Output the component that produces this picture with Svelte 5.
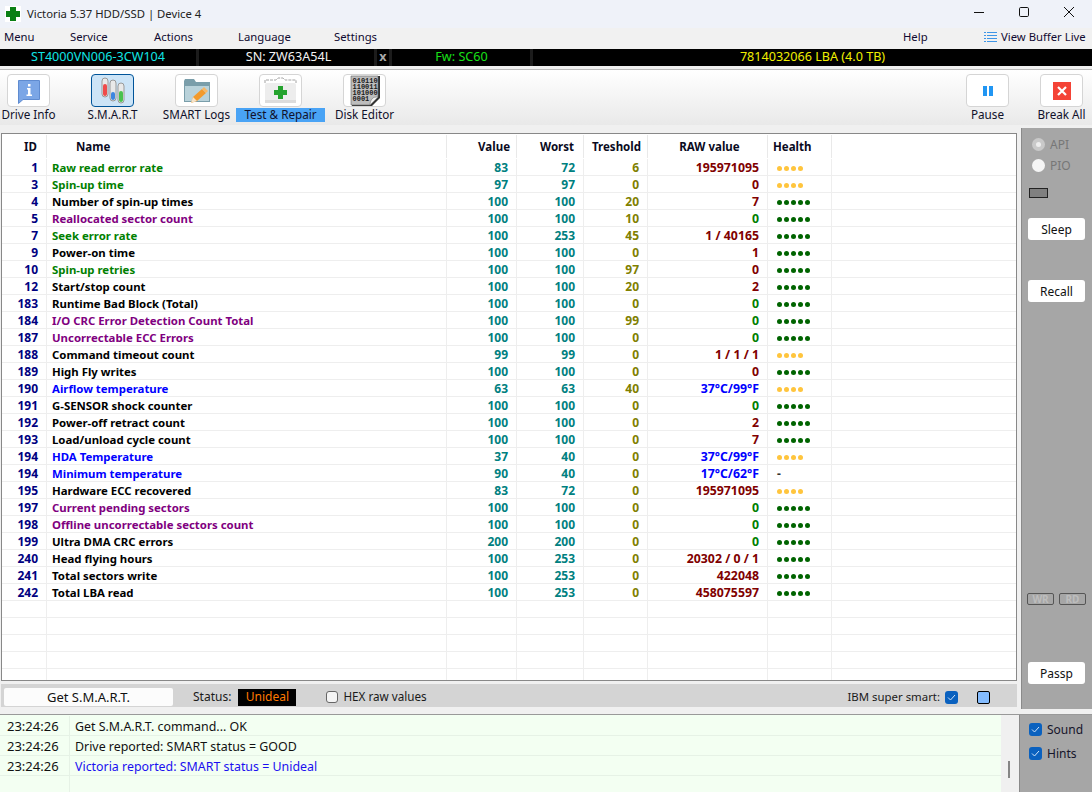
<script>
  const rows = [
    [1, 'Raw read error rate', 'g', 83, 72, 6, '195971095', 'm', 4],
    [3, 'Spin-up time', 'g', 97, 97, 0, '0', 'm', 4],
    [4, 'Number of spin-up times', 'k', 100, 100, 20, '7', 'm', 5],
    [5, 'Reallocated sector count', 'p', 100, 100, 10, '0', 'g', 5],
    [7, 'Seek error rate', 'g', 100, 253, 45, '1 / 40165', 'm', 5],
    [9, 'Power-on time', 'k', 100, 100, 0, '1', 'm', 5],
    [10, 'Spin-up retries', 'g', 100, 100, 97, '0', 'm', 5],
    [12, 'Start/stop count', 'k', 100, 100, 20, '2', 'm', 5],
    [183, 'Runtime Bad Block (Total)', 'k', 100, 100, 0, '0', 'g', 5],
    [184, 'I/O CRC Error Detection Count Total', 'p', 100, 100, 99, '0', 'g', 5],
    [187, 'Uncorrectable ECC Errors', 'p', 100, 100, 0, '0', 'g', 5],
    [188, 'Command timeout count', 'k', 99, 99, 0, '1 / 1 / 1', 'm', 4],
    [189, 'High Fly writes', 'k', 100, 100, 0, '0', 'm', 5],
    [190, 'Airflow temperature', 'b', 63, 63, 40, '37°C/99°F', 'b', 4],
    [191, 'G-SENSOR shock counter', 'k', 100, 100, 0, '0', 'g', 5],
    [192, 'Power-off retract count', 'k', 100, 100, 0, '2', 'm', 5],
    [193, 'Load/unload cycle count', 'k', 100, 100, 0, '7', 'm', 5],
    [194, 'HDA Temperature', 'b', 37, 40, 0, '37°C/99°F', 'b', 4],
    [194, 'Minimum temperature', 'b', 90, 40, 0, '17°C/62°F', 'b', 0],
    [195, 'Hardware ECC recovered', 'k', 83, 72, 0, '195971095', 'm', 4],
    [197, 'Current pending sectors', 'p', 100, 100, 0, '0', 'g', 5],
    [198, 'Offline uncorrectable sectors count', 'p', 100, 100, 0, '0', 'g', 5],
    [199, 'Ultra DMA CRC errors', 'k', 200, 200, 0, '0', 'g', 5],
    [240, 'Head flying hours', 'k', 100, 253, 0, '20302 / 0 / 1', 'm', 5],
    [241, 'Total sectors write', 'k', 100, 253, 0, '422048', 'm', 5],
    [242, 'Total LBA read', 'k', 100, 253, 0, '458075597', 'm', 5]
  ];
  const empties = [0, 1, 2, 3, 4];
  const logs = [
    ['23:24:26', 'Get S.M.A.R.T. command... OK', ''],
    ['23:24:26', 'Drive reported: SMART status = GOOD', ''],
    ['23:24:26', 'Victoria reported: SMART status = Unideal', 'blue'],
    ['', '', '']
  ];
</script>

<div class="win">
  <header class="title">
    <svg class="logo" width="16" height="16" viewBox="0 0 16 16"><rect width="16" height="16" fill="#fff"/><path d="M5 1h6v4h4v6h-4v4H5v-4H1V5h4z" fill="#0a7f14"/></svg>
    <span class="title-text">Victoria 5.37 HDD/SSD | Device 4</span>
    <div class="winbtns">
      <svg width="12" height="12" viewBox="0 0 12 12"><path d="M1 6.500h10" stroke="#111" fill="none"/></svg>
      <svg width="12" height="12" viewBox="0 0 12 12"><rect x="1.500" y="1.500" width="9" height="9" rx="1.200" stroke="#111" fill="none"/></svg>
      <svg width="12" height="12" viewBox="0 0 12 12"><path d="M1 1l10 10M11 1L1 11" stroke="#111" fill="none"/></svg>
    </div>
  </header>

  <nav class="menu">
    <span class="m1">Menu</span><span class="m2">Service</span><span class="m3">Actions</span><span class="m4">Language</span><span class="m5">Settings</span>
    <span class="help">Help</span>
    <span class="vb">
      <svg width="13" height="13" viewBox="0 0 13 13"><path d="M0 1.500h2M3 1.500h10M0 4.500h2M3 4.500h10M0 7.500h2M3 7.500h10M0 10.500h2M3 10.500h10" stroke="#3f96e6" fill="none"/></svg>
      View Buffer Live
    </span>
  </nav>

  <div class="info">
    <div class="i-model">ST4000VN006-3CW104</div>
    <div class="i-sn">SN: ZW63A54L</div>
    <div class="i-x">x</div>
    <div class="i-fw">Fw: SC60</div>
    <div class="i-lba">7814032066 LBA (4.0 TB)</div>
  </div>

  <div class="toolbar">
    <div class="tool">
      <div class="tbtn">
        <svg width="32" height="32" viewBox="0 0 32 32"><path d="M5.500 5.500h21v19H10l-4.500 4z" fill="#7ba6e6" stroke="#5f8bd0"/><rect x="15" y="9" width="2.500" height="2.500" fill="#fff"/><path d="M14 13h3.500v6.500H19V21h-5.500v-1.500H15v-5h-1z" fill="#fff"/></svg>
      </div>
      <span>Drive Info</span>
    </div>
    <div class="tool">
      <div class="tbtn active">
        <svg width="32" height="32" viewBox="0 0 32 32">
          <rect x="5" y="3" width="6" height="19" rx="3" fill="#e9e9e9" stroke="#999"/><rect x="6" y="9" width="4" height="12" rx="2" fill="#ef4b4b"/>
          <rect x="13" y="5" width="6" height="21" rx="3" fill="#e9e9e9" stroke="#999"/><rect x="14" y="17" width="4" height="8" rx="2" fill="#3d86e0"/>
          <rect x="21" y="8" width="6" height="20" rx="3" fill="#e9e9e9" stroke="#999"/><rect x="22" y="16" width="4" height="11" rx="2" fill="#49c24f"/>
        </svg>
      </div>
      <span>S.M.A.R.T</span>
    </div>
    <div class="tool">
      <div class="tbtn">
        <svg width="32" height="32" viewBox="0 0 32 32">
          <path d="M3 6l1-2h9l2 3h14v20H3z" fill="#7a9eaa"/>
          <path d="M4 11h24v15H4z" fill="#b9d2da"/>
          <path d="M10 28l2-6 9-8 4 4-9 8z" fill="#f39a2b"/>
          <path d="M10 28l2-6 4 4z" fill="#f6e3c9"/>
          <path d="M21 14l2-2 4 4-2 2z" fill="#f7b766"/>
        </svg>
      </div>
      <span>SMART Logs</span>
    </div>
    <div class="tool">
      <div class="tbtn">
        <svg width="35" height="28" viewBox="0 0 35 28">
          <path d="M2 6V3h11l2-2h5l2 2h11v3" fill="none" stroke="#8b8b8b" stroke-width=".8" stroke-dasharray="3 1"/>
          <rect x="2" y="6" width="31" height="20" rx="2" fill="#ededed"/>
          <rect x="2" y="23" width="31" height="3" fill="#dcdcdc"/>
          <path d="M15 9h5v4h4v5h-4v4h-5v-4h-4v-5h4z" fill="#25a32e"/>
        </svg>
      </div>
      <span class="sel">Test &amp; Repair</span>
    </div>
    <div class="tool">
      <div class="tbtn">
        <svg width="32" height="32" viewBox="0 0 32 32">
          <path d="M3 1h28v22l-8 8H3z" fill="#333"/>
          <path d="M2 1h27v21l-8 8H2z" fill="#bdbdbd" stroke="#666" stroke-width=".6"/>
          <path d="M29 22l-8 8c0-3 1-5 2-6 1-2 4-2 6-2z" fill="#f2f2f2" stroke="#777" stroke-width=".6"/>
          <text x="3.500" y="8" class="bin">010110</text>
          <text x="3.500" y="14" class="bin">110011</text>
          <text x="3.500" y="20" class="bin">101000</text>
          <text x="3.500" y="26" class="bin">0001</text>
        </svg>
      </div>
      <span>Disk Editor</span>
    </div>
    <div class="spacer"></div>
    <div class="tool pause">
      <div class="tbtn">
        <svg width="10" height="10" viewBox="0 0 10 10"><path d="M0 0h4v10H0zM6 0h4v10H6z" fill="#2196f3"/></svg>
      </div>
      <span>Pause</span>
    </div>
    <div class="tool">
      <div class="tbtn">
        <svg width="18" height="18" viewBox="0 0 18 18"><rect width="18" height="18" fill="#f44336"/><path d="M5 5l8 8M13 5l-8 8" stroke="#fff" stroke-width="2.200" fill="none"/></svg>
      </div>
      <span>Break All</span>
    </div>
  </div>

  <div class="main">
    <section class="left">
      <div class="table">
        <div class="hrow">
          <div class="h c-id">ID</div>
          <div class="h c-name">Name</div>
          <div class="h c-val">Value</div>
          <div class="h c-wor">Worst</div>
          <div class="h c-tre">Treshold</div>
          <div class="h c-raw">RAW value</div>
          <div class="h c-hea">Health</div>
          <div class="h-rest"></div>
        </div>
        {#each rows as r}
          <div class="row">
            <div class="c c-id navy">{r[0]}</div>
            <div class="c c-name {r[2]}">{r[1]}</div>
            <div class="c c-val teal">{r[3]}</div>
            <div class="c c-wor teal">{r[4]}</div>
            <div class="c c-tre olive">{r[5]}</div>
            <div class="c c-raw {r[7]}">{r[6]}</div>
            <div class="c c-hea">
              {#if r[8] === 0}<span class="dash">-</span>{/if}
              {#each Array(r[8]) as _}<i class="dot" class:y={r[8] === 4}></i>{/each}
            </div>
            <div class="c-rest"></div>
          </div>
        {/each}
        {#each empties as e}
          <div class="row">
            <div class="c c-id"></div><div class="c c-name"></div><div class="c c-val"></div><div class="c c-wor"></div><div class="c c-tre"></div><div class="c c-raw"></div><div class="c c-hea"></div><div class="c-rest"></div>
          </div>
        {/each}
      </div>
      <div class="status">
        <button class="get">Get S.M.A.R.T.</button>
        <span class="st-l">Status:</span>
        <span class="st-v">Unideal</span>
        <span class="cb"></span>
        <span class="hex">HEX raw values</span>
        <span class="ibm">IBM super smart:</span>
        <span class="chk"><svg width="9" height="7" viewBox="0 0 9 7"><path d="M1 3.500l2.500 2.500L8 1" stroke="#cfe4fa" fill="none"/></svg></span>
        <span class="sq"></span>
      </div>
    </section>
    <aside class="side">
      <div class="radio"><i class="rd on"></i>API</div>
      <div class="radio"><i class="rd"></i>PIO</div>
      <div class="led"></div>
      <button class="sbtn sleep">Sleep</button>
      <button class="sbtn recall">Recall</button>
      <div class="wrrd"><span>WR</span><span>RD</span></div>
      <button class="sbtn passp">Passp</button>
    </aside>
  </div>

  <div class="bottom">
    <div class="log">
      <div class="log-rows">
        {#each logs as l}
          <div class="lrow"><div class="lt">{l[0]}</div><div class="lm {l[2]}">{l[1]}</div></div>
        {/each}
      </div>
      <div class="sb"><i></i></div>
    </div>
    <div class="opts">
      <label class="opt"><span class="chk"><svg width="9" height="7" viewBox="0 0 9 7"><path d="M1 3.500l2.500 2.500L8 1" stroke="#cfe4fa" fill="none"/></svg></span>Sound</label>
      <label class="opt"><span class="chk"><svg width="9" height="7" viewBox="0 0 9 7"><path d="M1 3.500l2.500 2.500L8 1" stroke="#cfe4fa" fill="none"/></svg></span>Hints</label>
    </div>
  </div>
</div>

<style>
  :global(body) { margin: 0; background: #fff; }
  .win { width: 1092px; height: 792px; overflow: hidden; display: flex; flex-direction: column; font: 12px/1 "Noto Sans", "Liberation Sans", sans-serif; color: #111; background: #f0f0f0; }
  .title { height: 28px; flex: none; background: #eff2f9; display: flex; align-items: center; padding: 0 0 0 5px; box-sizing: border-box; }
  .title-text { margin-left: 6px; color: #222; font-size: 11.3px; }
  .winbtns { margin-left: auto; display: flex; gap: 33px; padding-right: 17px; margin-top: -4px; }
  .menu { height: 21px; flex: none; box-sizing: border-box; padding: 0 0 3px 4px; background: #f1f1f1; display: flex; align-items: center; color: #100a30; font-size: 11.3px; }
  .menu > span { flex: none; }
  .m1 { width: 66px; }
  .m2 { width: 84px; }
  .m3 { width: 84px; }
  .m4 { width: 96px; }
  .m5 { width: 569px; }
  .help { width: 81px; }
  .vb { display: flex; align-items: center; gap: 4px; white-space: nowrap; }
  .info { height: 17px; flex: none; background: #000; display: grid; grid-template-columns: 199px 178px 15px 141px 1fr; align-items: center; font-size: 12.6px; }
  .info div { height: 100%; display: flex; align-items: center; justify-content: center; box-sizing: border-box; border-right: 3px solid #1c1c1c; }
  .i-model { color: #10e6e6; }
  .info .i-sn { color: #f3f3f3; padding-left: 4px; }
  .i-x { color: #aaa; font-weight: 700; }
  .info .i-fw { color: #18e018; padding-left: 1px; }
  .info .i-lba { color: #f0f000; border: 0; }
  .toolbar { height: 56px; flex: none; margin-top: 3px; box-sizing: border-box; border-top: 1px solid #bbb; background: linear-gradient(#fff, #e9e9e9); display: flex; gap: 27px; padding: 4px 2px 0 0; }
  .tool { width: 57px; display: flex; flex-direction: column; align-items: center; color: #11112a; white-space: nowrap; font-size: 11.7px; }
  .tool span { padding: 1px 0; }
  .tbtn { width: 43px; height: 33px; flex: none; box-sizing: border-box; border: 1px solid #d5d5d5; border-radius: 4px; background: #fff; display: flex; align-items: center; justify-content: center; margin-bottom: 1px; }
  .tbtn.active { background: #cce4f7; border-color: #005499; }
  .tool .sel { background: #49a3f5; padding: 1px 8px; }
  .spacer { flex: 1; }
  .pause { margin-right: -10px; }
  .bin { font: 700 7px "Liberation Mono", monospace; fill: #1a1a1a; }
  .main { height: 581px; flex: none; margin-top: 3px; display: flex; background: #f0f0f0; }
  .left { width: 1017px; flex: none; display: flex; flex-direction: column; padding: 5px 0 0 1px; box-sizing: border-box; }
  .table { height: 548px; flex: none; box-sizing: border-box; border: 1px solid #888; background: #fff; overflow: hidden; font: 700 12px/1 "Noto Sans", "Liberation Sans", sans-serif; }
  .hrow, .row { display: grid; grid-template-columns: 45px 400px 70px 67px 64px 120px 64px 1fr; }
  .hrow { height: 25px; align-items: stretch; font-size: 11.5px; }
  .h { display: flex; align-items: center; justify-content: flex-end; border-right: 1px solid #e9e9e9; padding-right: 6px; color: #0a0a1e; margin: 1px 0; }
  .h.c-name { justify-content: flex-start; padding-left: 29px; }
  .h.c-id, .h.c-wor { padding-right: 9px; }
  .h.c-raw { justify-content: center; padding-left: 10px; }
  .h.c-hea { justify-content: flex-start; padding-left: 5px; }
  .row { height: 17px; box-sizing: border-box; border-bottom: 1px solid #eee; align-items: stretch; }
  .c { display: flex; align-items: center; justify-content: flex-end; padding: 1px 8px 0 0; box-sizing: border-box; border-right: 1px solid #eee; }
  .c.c-name { justify-content: flex-start; padding-left: 5px; font-size: 11.4px; }
  .c.c-raw { font-size: 12.3px; padding-top: 2px; }
  .c.c-hea { justify-content: flex-start; padding: 2px 0 0 9px; gap: 2px; }
  .navy { color: #000080; } .teal { color: #008080; } .olive { color: #808000; } .m { color: #800000; }
  .g { color: #008000; } .p { color: #800080; } .b { color: #0000ff; } .k { color: #000; }
  .dot { width: 5px; height: 5px; border-radius: 50%; background: #006400; }
  .dot.y { background: #ffc53d; }
  .dash { color: #333; }
  .status { height: 23px; flex: none; box-sizing: border-box; margin-top: 3px; background: #d4d4d4; display: flex; align-items: center; padding: 3px 0 0 3px; color: #1a1a1a; }
  .get { width: 169px; height: 18px; border: 0; border-radius: 2px; background: #fcfcfc; font: inherit; font-size: 13px; padding: 0; color: #111; }
  .st-l { margin-left: 20px; }
  .st-v { margin-left: 7px; width: 58px; height: 17px; background: #000; color: #ff7a00; display: flex; align-items: center; justify-content: center; }
  .cb { margin-left: 30px; width: 12px; height: 12px; box-sizing: border-box; border: 1px solid #666; border-radius: 3px; background: #f4f4f4; }
  .hex { margin-left: 5px; font-size: 11.7px; }
  .ibm { margin-left: auto; font-size: 11.4px; }
  .chk { width: 13px; height: 13px; border-radius: 3px; background: #0a61bf; display: inline-flex; align-items: center; justify-content: center; flex: none; }
  .status .chk { margin-left: 5px; }
  .sq { width: 13px; height: 13px; box-sizing: border-box; border: 1px solid #000; border-radius: 2px; background: #84bcff; margin: 0 27px 0 19px; }
  .side { width: 71px; margin-left: 4px; flex: none; background: #a6a6a6; border-left: 1px solid #8a8a8a; box-sizing: border-box; display: flex; flex-direction: column; align-items: flex-start; padding: 10px 0 0 10px; color: #777; }
  .radio { display: flex; align-items: center; gap: 5px; height: 13px; margin-bottom: 8px; }
  .rd { width: 13px; height: 13px; border-radius: 50%; background: #f5f5f5; position: relative; }
  .rd.on { background: #c9c9c9; }
  .rd.on::after { content: ""; position: absolute; left: 4px; top: 4px; width: 5px; height: 5px; border-radius: 50%; background: #eee; }
  .led { width: 19px; height: 10px; box-sizing: border-box; border: 1px solid #222; background: #808080; margin: 8px 0 0 -3px; }
  .sbtn { width: 57px; height: 22px; border: 0; border-radius: 3px; background: #fff; font: inherit; color: #111; padding: 1px 0 0; margin-left: -4px; }
  .sleep { margin-top: 20px; }
  .recall { margin-top: 40px; }
  .wrrd { display: flex; gap: 5px; margin: 291px 0 0 -5px; }
  .wrrd span { width: 27px; height: 12px; box-sizing: border-box; border: 1px solid #555; border-radius: 2px; color: #bdbdbd; font: 700 10px/10px "Noto Sans", sans-serif; text-align: center; }
  .passp { margin-top: 57px; }
  .bottom { flex: none; height: 78px; margin-top: 5px; display: flex; border-top: 1px solid #999; box-sizing: border-box; }
  .log { width: 1017px; flex: none; display: flex; background: #f3fff2; }
  .log-rows { flex: 1; padding-top: 1px; }
  .lrow { height: 20px; display: flex; box-sizing: border-box; border-bottom: 1px solid #e6f2e6; align-items: stretch; font-size: 12.4px; }
  .lt { width: 70px; box-sizing: border-box; padding: 1px 0 0 7px; display: flex; align-items: center; border-right: 1px solid #e6f2e6; font-size: 13px; flex: none; white-space: nowrap; }
  .lm { padding: 3px 0 0 5px; display: flex; align-items: center; }
  .lm.blue { color: #1a10f0; }
  .lrow:last-child { border: 0; height: 25px; }
  .sb { width: 16px; background: #f0f0f0; position: relative; }
  .sb i { position: absolute; left: 7px; top: 46px; width: 2px; height: 17px; background: #858585; }
  .opts { flex: 1; margin-left: 2px; background: #a6a6a6; border-left: 1px solid #8a8a8a; padding: 8px 0 0 9px; }
  .opt { display: flex; align-items: center; gap: 5px; margin-bottom: 11px; height: 13px; color: #15152a; }
</style>
